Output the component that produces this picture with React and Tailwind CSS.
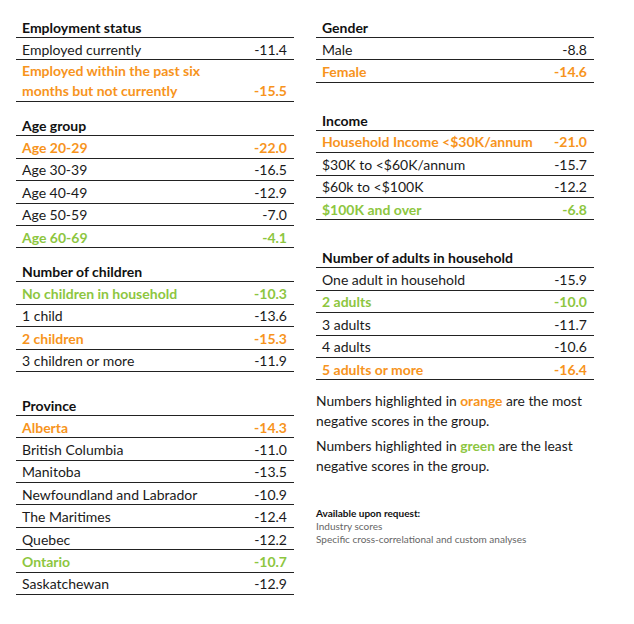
const ORANGE = "text-[#f7941d]";
const GREEN = "text-[#8dc63f]";

const left = [
  {
    title: "Employment status",
    gap: "mt-[18px]",
    rows: [
      ["Employed currently", "-11.4"],
      ["Employed within the past six months but not currently", "-15.5", "o", true],
    ],
  },
  {
    title: "Age group",
    gap: "mt-[14px]",
    rows: [
      ["Age 20-29", "-22.0", "o"],
      ["Age 30-39", "-16.5"],
      ["Age 40-49", "-12.9"],
      ["Age 50-59", "-7.0"],
      ["Age 60-69", "-4.1", "g"],
    ],
  },
  {
    title: "Number of children",
    gap: "mt-[14px]",
    rows: [
      ["No children in household", "-10.3", "g"],
      ["1 child", "-13.6"],
      ["2 children", "-15.3", "o"],
      ["3 children or more", "-11.9"],
    ],
  },
  {
    title: "Province",
    gap: "mt-[24px]",
    rows: [
      ["Alberta", "-14.3", "o"],
      ["British Columbia", "-11.0"],
      ["Manitoba", "-13.5"],
      ["Newfoundland and Labrador", "-10.9"],
      ["The Maritimes", "-12.4"],
      ["Quebec", "-12.2"],
      ["Ontario", "-10.7", "g"],
      ["Saskatchewan", "-12.9"],
    ],
  },
];

const right = [
  {
    title: "Gender",
    gap: "mt-[18px]",
    rows: [
      ["Male", "-8.8"],
      ["Female", "-14.6", "o"],
    ],
  },
  {
    title: "Income",
    gap: "mt-[28px]",
    rows: [
      ["Household Income <$30K/annum", "-21.0", "o"],
      ["$30K to <$60K/annum", "-15.7"],
      ["$60k to <$100K", "-12.2"],
      ["$100K and over", "-6.8", "g"],
    ],
  },
  {
    title: "Number of adults in household",
    gap: "mt-[28px]",
    rows: [
      ["One adult in household", "-15.9"],
      ["2 adults", "-10.0", "g"],
      ["3 adults", "-11.7"],
      ["4 adults", "-10.6"],
      ["5 adults or more", "-16.4", "o"],
    ],
  },
];

const Row = ({ label, value, tone, tall }) => {
  const color = tone === "o" ? `${ORANGE} font-bold` : tone === "g" ? `${GREEN} font-bold` : "text-[#1a1a1a]";
  if (tall) {
    return (
      <div className={`flex items-end justify-between border-b border-[#222] pl-[6px] pr-[7px] h-[42px] leading-[20px] ${color}`}>
        <span className="w-[200px]">{label}</span>
        <span>{value}</span>
      </div>
    );
  }
  return (
    <div className={`flex items-center justify-between border-b border-[#222] pl-[6px] pr-[7px] pt-[2px] h-[22.4px] leading-[20px] ${color}`}>
      <span>{label}</span>
      <span>{value}</span>
    </div>
  );
};

const Section = ({ title, gap, rows }) => (
  <div className={gap}>
    <div className="h-[20px] leading-[20px] pl-[6px] font-bold text-[#111] border-b border-[#222]">{title}</div>
    {rows.map(([label, value, tone, tall]) => (
      <Row key={label} label={label} value={value} tone={tone} tall={tall} />
    ))}
  </div>
);

export default function App() {
  return (
    <div className="w-[634px] h-[624px] bg-white text-[14px] font-['Lato',sans-serif] flex gap-[22px] pl-[16px]">
      <div className="w-[278px]">
        {left.map((s) => (
          <Section key={s.title} {...s} />
        ))}
      </div>
      <div className="w-[278px]">
        {right.map((s) => (
          <Section key={s.title} {...s} />
        ))}
        <p className="mt-[11px] leading-[20px] text-[13.8px] text-[#1a1a1a]">
          Numbers highlighted in <span className={`${ORANGE} font-bold`}>orange</span> are the most negative scores in the group.
        </p>
        <p className="mt-[5px] leading-[20px] text-[13.8px] text-[#1a1a1a]">
          Numbers highlighted in <span className={`${GREEN} font-bold`}>green</span> are the least negative scores in the group.
        </p>
        <div className="mt-[31px] text-[10px] leading-[13px]">
          <div className="font-bold text-[#111]">Available upon request:</div>
          <div className="text-[#666]">Industry scores</div>
          <div className="text-[#666]">Specific cross-correlational and custom analyses</div>
        </div>
      </div>
    </div>
  );
}
